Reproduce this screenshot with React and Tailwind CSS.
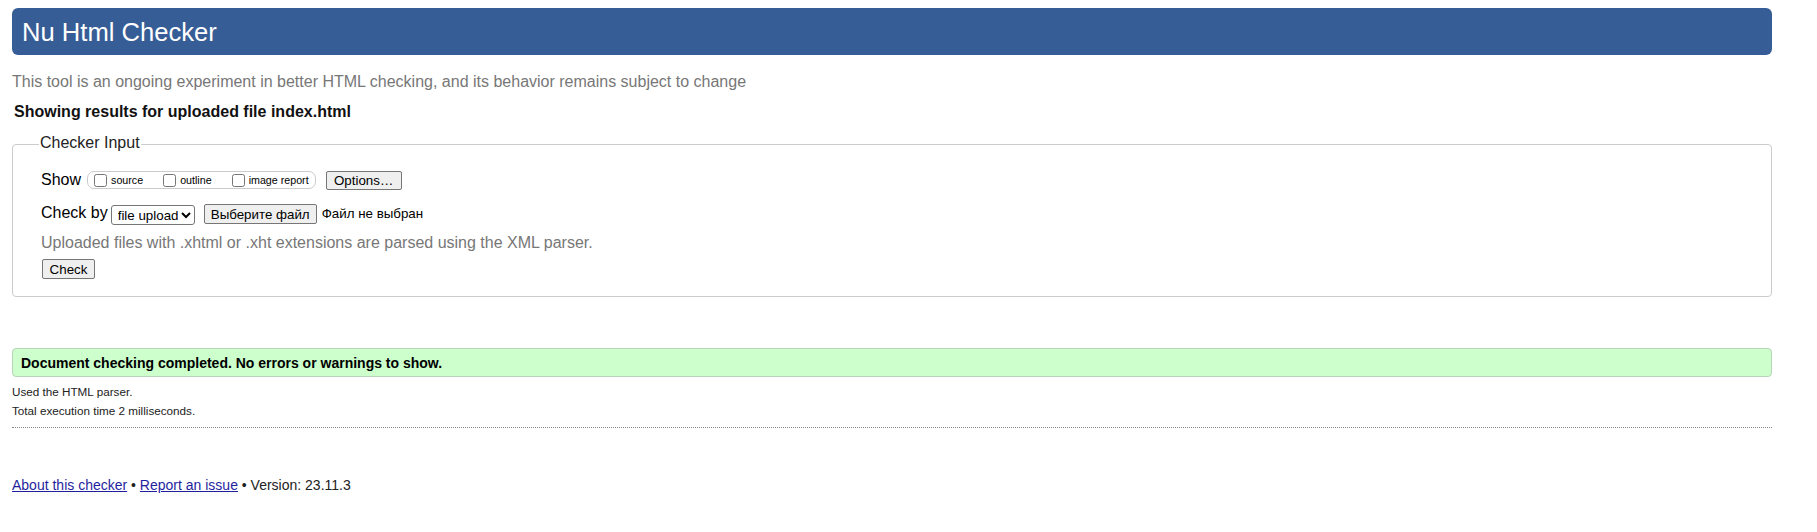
export default function App() {
  return (
    <div className="w-[1817px] h-[532px] bg-white overflow-hidden text-black font-['Liberation_Sans',Arial,sans-serif]">
      <div className="ml-[12px] w-[1760px] pt-[8px]">
        <h1 className="h-[47px] rounded-[6px] bg-[#365d95] text-white text-[25.6px] leading-[30px] pl-[10px] flex items-center font-normal">
          Nu Html Checker
        </h1>
        <p className="mt-[17px] text-[16px] leading-[20px] text-[#777]">
          This tool is an ongoing experiment in better HTML checking, and its behavior remains subject to change
        </p>
        <p className="mt-[10px] pl-[2px] text-[16px] leading-[20px] font-bold text-[#111]">
          Showing results for uploaded file index.html
        </p>

        <fieldset className="mt-[13px] border border-[#ccc] rounded-[4px] px-[28px] pt-[17px] pb-[17px]">
          <legend className="text-[16px] leading-[16px] pb-[3px] px-[1px] -ml-[2px] text-[#222]">Checker Input</legend>

          <div className="flex items-center h-[18px]">
            <span className="text-[16px] leading-[18px]">Show</span>
            <div className="ml-[6px] h-[18px] border border-[#ccc] rounded-[7px] pl-[6px] pr-[6px] flex items-center text-[10.7px] leading-[12px]">
              <label className="flex items-center">
                <input type="checkbox" className="m-0 w-[13px] h-[13px]" />
                <span className="ml-[4px]">source</span>
              </label>
              <label className="flex items-center ml-[20px]">
                <input type="checkbox" className="m-0 w-[13px] h-[13px]" />
                <span className="ml-[4px]">outline</span>
              </label>
              <label className="flex items-center ml-[20px]">
                <input type="checkbox" className="m-0 w-[13px] h-[13px]" />
                <span className="ml-[4px]">image report</span>
              </label>
            </div>
            <button className="ml-[10px] w-[76px] h-[19px] bg-[#efefef] border border-[#767676] rounded-[2px] text-[13.33px] leading-[15px] flex items-center justify-center">
              Options…
            </button>
          </div>

          <div className="mt-[14px] flex items-start">
            <span className="mt-[1px] text-[16px] leading-[18px]">Check by</span>
            <select className="ml-[3px] mt-[2px] h-[20px] w-[84px] border border-[#767676] rounded-[3px] bg-white text-[13.33px] pl-[2px]" defaultValue="file">
              <option value="file">file upload</option>
            </select>
            <button className="ml-[9px] mt-[1px] w-[113px] h-[20px] bg-[#efefef] border border-[#767676] rounded-[2px] text-[13.33px] leading-[15px] flex items-center justify-center">
              Выберите файл
            </button>
            <span className="ml-[5px] mt-[1px] text-[13.33px] leading-[20px]">Файл не выбран</span>
          </div>

          <p className="mt-[8px] text-[16px] leading-[20px] text-[#777]">
            Uploaded files with .xhtml or .xht extensions are parsed using the XML parser.
          </p>

          <button className="mt-[6px] ml-[1px] w-[53px] h-[20px] bg-[#efefef] border border-[#767676] rounded-[2px] text-[13.33px] leading-[15px] flex items-center justify-center">
            Check
          </button>
        </fieldset>

        <div className="mt-[51px] h-[29px] border border-[#b8d4b8] rounded-[4px] bg-[#ccffcc] pl-[8px] pt-[6px] text-[14px] leading-[16px] font-bold">
          Document checking completed. No errors or warnings to show.
        </div>

        <p className="mt-[5px] text-[11.7px] leading-[19px] text-[#222]">Used the HTML parser.</p>
        <p className="text-[11.7px] leading-[19px] text-[#222]">Total execution time 2 milliseconds.</p>

        <div className="mt-[7px] h-0 border-t border-dotted border-[#888]"></div>

        <p className="mt-[48px] text-[14px] leading-[18px] text-[#222]">
          <a href="#" className="text-[#1f1f9e] underline">About this checker</a>
          {" • "}
          <a href="#" className="text-[#1f1f9e] underline">Report an issue</a>
          {" • Version: 23.11.3"}
        </p>
      </div>
    </div>
  );
}
